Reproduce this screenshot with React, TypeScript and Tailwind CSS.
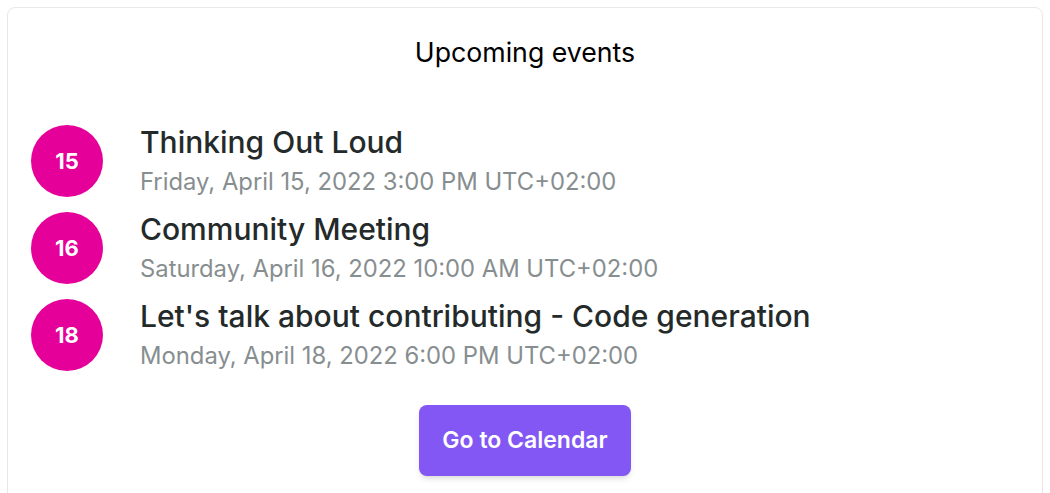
const events = [
  { day: "15", title: "Thinking Out Loud", date: "Friday, April 15, 2022 3:00 PM UTC+02:00" },
  { day: "16", title: "Community Meeting", date: "Saturday, April 16, 2022 10:00 AM UTC+02:00" },
  { day: "18", title: "Let's talk about contributing - Code generation", date: "Monday, April 18, 2022 6:00 PM UTC+02:00" },
];

export default function App() {
  return (
    <div
      className="min-h-screen bg-white p-[7px] pb-0"
      style={{ fontFamily: "Inter, 'Noto Sans', sans-serif" }}
    >
      <div className="rounded-lg border border-[#e8e8e8] px-[23px] pt-[30px] pb-6">
        <h2 className="text-center text-[26.7px] leading-[28px] text-black">
          Upcoming events
        </h2>
        <ul className="mt-[59px] flex flex-col gap-[15px]">
          {events.map((ev) => (
            <li key={ev.day} className="flex items-start">
              <div className="flex h-[72px] w-[72px] shrink-0 items-center justify-center rounded-full bg-[#e5009a] text-[22px] font-bold text-white">
                {ev.day}
              </div>
              <div className="-mt-[1px] ml-[37px] flex flex-col">
                <span className="text-[30px] font-medium leading-[36px] text-[#242a2a]">
                  {ev.title}
                </span>
                <span className="mt-[7px] text-[23.8px] leading-[30px] text-[#878e90]">
                  {ev.date}
                </span>
              </div>
            </li>
          ))}
        </ul>
        <div className="mt-[34px] flex justify-center">
          <button className="h-[71px] w-[212px] rounded-lg bg-[#8257f4] text-[23px] font-semibold text-white shadow-md">
            Go to Calendar
          </button>
        </div>
      </div>
    </div>
  );
}
